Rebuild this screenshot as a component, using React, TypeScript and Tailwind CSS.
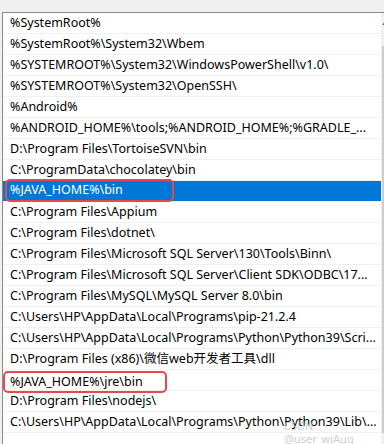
import React from "react";

const rows = [
  "%SystemRoot%",
  "%SystemRoot%\\System32\\Wbem",
  "%SYSTEMROOT%\\System32\\WindowsPowerShell\\v1.0\\",
  "%SYSTEMROOT%\\System32\\OpenSSH\\",
  "%Android%",
  "%ANDROID_HOME%\\tools;%ANDROID_HOME%;%GRADLE_...",
  "D:\\Program Files\\TortoiseSVN\\bin",
  "C:\\ProgramData\\chocolatey\\bin",
  "%JAVA_HOME%\\bin",
  "C:\\Program Files\\Appium",
  "C:\\Program Files\\dotnet\\",
  "C:\\Program Files\\Microsoft SQL Server\\130\\Tools\\Binn\\",
  "C:\\Program Files\\Microsoft SQL Server\\Client SDK\\ODBC\\17...",
  "C:\\Program Files\\MySQL\\MySQL Server 8.0\\bin",
  "C:\\Users\\HP\\AppData\\Local\\Programs\\pip-21.2.4",
  "C:\\Users\\HP\\AppData\\Local\\Programs\\Python\\Python39\\Scri...",
  "D:\\Program Files (x86)\\微信web开发者工具\\dll",
  "%JAVA_HOME%\\jre\\bin",
  "D:\\Program Files\\nodejs\\",
  "C:\\Users\\HP\\AppData\\Local\\Programs\\Python\\Python39\\Lib\\...",
  "",
];

const App = () => {
  return (
    <div
      className="w-[384px] h-[444px] overflow-hidden bg-[#f0f0f0] flex flex-col pt-[12px] pl-[2px]"
      style={{ fontFamily: '"Noto Sans", "Noto Sans CJK SC", sans-serif' }}
    >
      <div className="relative flex-1 min-h-0 flex border-l border-t border-[#8a8a8a] bg-white">
        <div className="flex-1 flex flex-col">
          {rows.map((text, i) => {
            if (i === 8) {
              return (
                <div
                  key={i}
                  className="relative z-10 h-[21px] shrink-0 border-b border-[#f0f0f0] bg-[#0078d7] flex items-start whitespace-nowrap text-[12.5px] text-white"
                >
                  <div className="ml-[2px] -mt-[2px] w-[169px] h-[23px] shrink-0 rounded-[5px] border-[2.5px] border-[#e5484d] flex items-center pl-[3px] leading-none">
                    {text}
                  </div>
                </div>
              );
            }
            if (i === 17) {
              return (
                <div
                  key={i}
                  className="relative z-10 h-[21px] shrink-0 border-b border-[#f0f0f0] flex items-start whitespace-nowrap text-[12.5px] text-black"
                >
                  <div className="mt-[1px] w-[164px] h-[22px] shrink-0 rounded-[5px] border-[2.5px] border-[#e5484d] flex items-center pl-[5px] leading-none">
                    {text}
                  </div>
                </div>
              );
            }
            return (
              <div
                key={i}
                className="h-[21px] shrink-0 border-b border-[#f0f0f0] pl-[7px] pr-1 flex items-center whitespace-nowrap overflow-hidden text-[12.5px] leading-none text-black"
              >
                {text}
              </div>
            );
          })}
        </div>
        <div className="w-[9px] shrink-0 flex flex-col items-center bg-[#f0f0f0] pt-[5px] pb-[11px]">
          <div className="text-[#606060] text-[8px] leading-none pl-[2px]">▲</div>
          <div className="mt-[20px] flex-1 self-stretch ml-[1px] bg-[#cdcdcd]" />
        </div>
        {/* watermark */}
        <div className="absolute left-[281px] top-[406px] z-20 text-[11px] leading-[13px] text-[#c4c4c4] opacity-80">
          CSDN @user_wjAug
        </div>
      </div>
    </div>
  );
};

export default App;
